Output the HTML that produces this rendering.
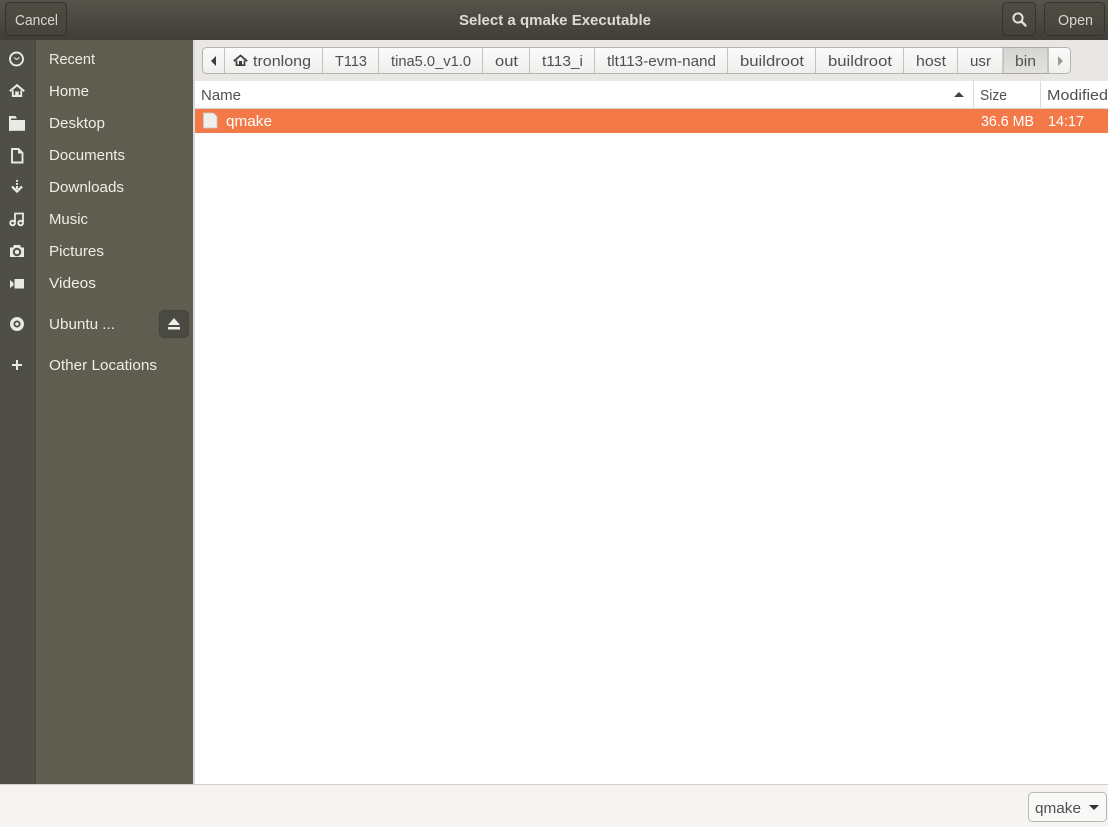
<!DOCTYPE html>
<html><head><meta charset="utf-8"><title>Select a qmake Executable</title>
<style>
html,body{margin:0;padding:0;width:1108px;height:827px;overflow:hidden;background:#fff}
svg{display:block}
text{font-family:"Liberation Sans",sans-serif;font-size:14.5px;white-space:pre}
.s{fill:#eeede8}
.p{fill:#505050}
.h{fill:#d8d6cd}
</style></head><body>
<svg width="1108" height="827" viewBox="0 0 1108 827" xmlns="http://www.w3.org/2000/svg">
<defs>
<linearGradient id="hd" x1="0" y1="0" x2="0" y2="1"><stop offset="0" stop-color="#57534a"/><stop offset="1" stop-color="#3f3e38"/></linearGradient>
<linearGradient id="pb" x1="0" y1="0" x2="0" y2="1"><stop offset="0" stop-color="#fbfafa"/><stop offset="1" stop-color="#f0efed"/></linearGradient>
<linearGradient id="pa" x1="0" y1="0" x2="0" y2="1"><stop offset="0" stop-color="#d6d5d2"/><stop offset="1" stop-color="#e2e1df"/></linearGradient>
<linearGradient id="btn" x1="0" y1="0" x2="0" y2="1"><stop offset="0" stop-color="#4f4c43"/><stop offset="1" stop-color="#45433c"/></linearGradient>
</defs>
<!-- header -->
<rect width="1108" height="40" fill="url(#hd)"/>
<rect x="5.5" y="2.5" width="61" height="33" rx="4" fill="url(#btn)" stroke="#34332e"/>
<rect x="1002.5" y="2.5" width="33" height="33" rx="4" fill="url(#btn)" stroke="#34332e"/>
<rect x="1044.5" y="2.5" width="60" height="33" rx="4" fill="url(#btn)" stroke="#34332e"/>
<text x="15" y="25" class="h" textLength="43" lengthAdjust="spacingAndGlyphs">Cancel</text>
<text x="459" y="25" fill="#dfdbd2" style="font-weight:bold" textLength="192" lengthAdjust="spacingAndGlyphs">Select a qmake Executable</text>
<circle cx="1018" cy="18" r="4.600" fill="none" stroke="#e2e0da" stroke-width="2"/>
<path d="M1021.500 21.500l4 4" stroke="#e2e0da" stroke-width="2.400" stroke-linecap="round"/>
<text x="1058" y="25" class="h" textLength="35" lengthAdjust="spacingAndGlyphs">Open</text>
<!-- sidebar -->
<rect x="0" y="40" width="36" height="744" fill="#4f4e47"/>
<rect x="35" y="40" width="1" height="744" fill="#47463f"/>
<rect x="36" y="40" width="157" height="744" fill="#5f5d50"/>
<rect x="193" y="40" width="2" height="744" fill="#d9d8d5"/>
<!-- sidebar icons -->
<g fill="#e9e9e6">
<circle cx="16.500" cy="59" r="6.500" fill="none" stroke="#e9e9e6" stroke-width="1.900"/>
<path d="M14 57.500l2.500 2 3-2" fill="none" stroke="#e9e9e6" stroke-width="1.100"/>
<path d="M9.800 91.200L17 85.200l7.200 6" fill="none" stroke="#e9e9e6" stroke-width="2"/>
<path d="M12.800 90.500V96h8.400v-5.500" fill="none" stroke="#e9e9e6" stroke-width="1.900"/>
<rect x="15.200" y="91.500" width="3.600" height="5.500"/>
<path d="M9 116h6.500l1.500 2.500h-6V131H9z"/>
<rect x="11" y="120" width="14" height="10.800"/>
<path d="M12 149h6.500l4 4v9.500H12z" fill="none" stroke="#e9e9e6" stroke-width="1.900"/>
<path d="M18 149v4.500h4.500" fill="#e9e9e6"/>
<rect x="16" y="180" width="2" height="1.800"/><rect x="16" y="183" width="2" height="1.800"/><rect x="16" y="186" width="2" height="3"/>
<path d="M12 186.500l5 5 5-5" fill="none" stroke="#e9e9e6" stroke-width="2.300"/>
<path d="M15 222.500v-9h8v9" fill="none" stroke="#e9e9e6" stroke-width="1.800"/>
<circle cx="12.600" cy="223" r="2.300" fill="none" stroke="#e9e9e6" stroke-width="2"/>
<circle cx="20.600" cy="223" r="2.300" fill="none" stroke="#e9e9e6" stroke-width="2"/>
<path fill-rule="evenodd" d="M10 247.500h3l.8-2.500h6.400l.8 2.500H24v9.500H10zM17 247.800a4.200 4.200 0 1 0 .01 0zM17 249.800a2.200 2.200 0 1 1-.01 0z"/>
<path d="M14.500 279H24v9.500h-9.500zM10 280l3.500 3v2.500l-3.500 2.500z"/>
<path fill-rule="evenodd" d="M17 317a7 7 0 1 0 .01 0zM17 320.500a3.500 3.500 0 1 1-.01 0zM17 322.200a1.800 1.800 0 1 0 .01 0z"/>
<rect x="12" y="364" width="10" height="2"/><rect x="16" y="360" width="2" height="10"/>
</g>
<!-- sidebar labels -->
<text x="49" y="64" class="s" textLength="46" lengthAdjust="spacingAndGlyphs">Recent</text>
<text x="49" y="96" class="s" textLength="40" lengthAdjust="spacingAndGlyphs">Home</text>
<text x="49" y="128" class="s" textLength="56" lengthAdjust="spacingAndGlyphs">Desktop</text>
<text x="49" y="160" class="s" textLength="76" lengthAdjust="spacingAndGlyphs">Documents</text>
<text x="49" y="192" class="s" textLength="75" lengthAdjust="spacingAndGlyphs">Downloads</text>
<text x="49" y="224" class="s" textLength="39" lengthAdjust="spacingAndGlyphs">Music</text>
<text x="49" y="256" class="s" textLength="55" lengthAdjust="spacingAndGlyphs">Pictures</text>
<text x="49" y="288" class="s" textLength="47" lengthAdjust="spacingAndGlyphs">Videos</text>
<text x="49" y="329" class="s" textLength="66" lengthAdjust="spacingAndGlyphs">Ubuntu ...</text>
<text x="49" y="370" class="s" textLength="108" lengthAdjust="spacingAndGlyphs">Other Locations</text>
<rect x="159.500" y="310.500" width="29" height="27" rx="5" fill="#4b4a42" stroke="#45443d"/>
<path d="M174 318l6 7h-12z" fill="#eeeeec"/><rect x="168" y="327" width="12" height="2.500" fill="#eeeeec"/>
<!-- path bar -->
<rect x="195" y="40" width="913" height="41" fill="#e8e7e5"/>
<rect x="202.500" y="47.500" width="868" height="26" rx="4" fill="url(#pb)" stroke="#b5b4b0"/>
<rect x="1003" y="47.500" width="45" height="26" fill="url(#pa)" stroke="#aaa9a5"/>
<g stroke="#c4c3bf">
<path d="M224.500 48v25M322.500 48v25M378.500 48v25M482.500 48v25M529.500 48v25M594.500 48v25M727.500 48v25M815.500 48v25M903.500 48v25M957.500 48v25M1048.500 48v25"/>
</g>
<path d="M216 56v10l-5-5z" fill="#3d3d3d"/>
<path d="M1058 56v10l5-5z" fill="#9a9994"/>
<path d="M233.800 61.200L240.500 55.500l6.700 5.700" fill="none" stroke="#3d3d3d" stroke-width="1.800"/>
<path d="M236.500 60.500V65.200h8V60.500" fill="none" stroke="#3d3d3d" stroke-width="1.700"/>
<rect x="239" y="61" width="3" height="5" fill="#3d3d3d"/>
<text x="253" y="66" class="p" textLength="58" lengthAdjust="spacingAndGlyphs">tronlong</text>
<text x="335" y="66" class="p" textLength="32" lengthAdjust="spacingAndGlyphs">T113</text>
<text x="391" y="66" class="p" textLength="80" lengthAdjust="spacingAndGlyphs">tina5.0_v1.0</text>
<text x="495" y="66" class="p" textLength="23" lengthAdjust="spacingAndGlyphs">out</text>
<text x="542" y="66" class="p" textLength="41" lengthAdjust="spacingAndGlyphs">t113_i</text>
<text x="607" y="66" class="p" textLength="109" lengthAdjust="spacingAndGlyphs">tlt113-evm-nand</text>
<text x="740" y="66" class="p" textLength="64" lengthAdjust="spacingAndGlyphs">buildroot</text>
<text x="828" y="66" class="p" textLength="64" lengthAdjust="spacingAndGlyphs">buildroot</text>
<text x="916" y="66" class="p" textLength="30" lengthAdjust="spacingAndGlyphs">host</text>
<text x="970" y="66" class="p" textLength="21" lengthAdjust="spacingAndGlyphs">usr</text>
<text x="1015" y="66" class="p" textLength="21" lengthAdjust="spacingAndGlyphs">bin</text>
<!-- list -->
<rect x="195" y="81" width="913" height="703" fill="#fff"/>
<rect x="195" y="108" width="913" height="1" fill="#d8d7d3"/>
<path d="M973.500 81v27M1040.500 81v27" stroke="#dcdbd7"/>
<text x="201" y="100" class="p" textLength="40" lengthAdjust="spacingAndGlyphs">Name</text>
<path d="M954 97l5-5 5 5z" fill="#444"/>
<text x="980" y="100" class="p" textLength="27" lengthAdjust="spacingAndGlyphs">Size</text>
<text x="1047" y="100" class="p" textLength="61" lengthAdjust="spacingAndGlyphs">Modified</text>
<rect x="195" y="109" width="913" height="24" fill="#f37a48"/>
<path d="M203.500 113h10l3.500 3.500V128h-13.500z" fill="#f1efec" stroke="#c9c7c2" stroke-width=".8"/>
<text x="226" y="126" fill="#fff" textLength="46" lengthAdjust="spacingAndGlyphs">qmake</text>
<text x="981" y="126" fill="#fff" textLength="53" lengthAdjust="spacingAndGlyphs">36.6 MB</text>
<text x="1048" y="126" fill="#fff" textLength="36" lengthAdjust="spacingAndGlyphs">14:17</text>
<!-- footer -->
<rect x="0" y="784" width="1108" height="43" fill="#f5f4f2"/>
<rect x="0" y="784" width="1108" height="1" fill="#d1d0cc"/>
<rect x="1028.500" y="792.500" width="78" height="29" rx="4" fill="#f8f8f6" stroke="#b9b8b4"/>
<text x="1035" y="813" class="p" textLength="46" lengthAdjust="spacingAndGlyphs">qmake</text>
<path d="M1089 805h10l-5 5z" fill="#333"/>
</svg>
</body></html>
